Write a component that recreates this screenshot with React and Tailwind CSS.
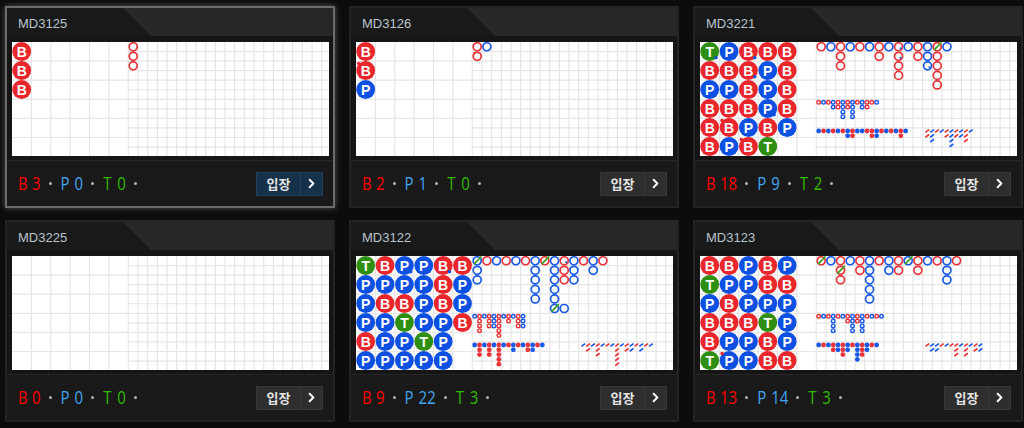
import { ChevronRight } from "lucide-react"

const RED = "#e8262c"
const BLUE = "#0d50e2"
const GREEN = "#2f8f12"
const RING_RED = "#e9343a"
const RING_BLUE = "#1a5ae8"

const tables = [
  {
    name: "MD3125", active: true, b: 3, p: 0, t: 0,
    bead: ["B", "B", "B"],
    big: "RRR",
  },
  {
    name: "MD3126", b: 2, p: 1, t: 0,
    bead: ["B", "B", "P"],
    beadDots: [[1, 0, "R"]],
    big: "RR B",
    bigDots: [[0, 1, "R"]],
  },
  {
    name: "MD3221", b: 18, p: 9, t: 2,
    bead: ["TPBBB", "BBBPB", "PPBPB", "BBBPB", "BBPBP", "BPBT"],
    beadDots: [[0, 0, "B"], [0, 2, "B"], [1, 2, "B"], [3, 3, "B"], [4, 1, "R"], [5, 2, "R"]],
    big: "R B RRR B R B RR B RRRR B RR BBB RRRRR B",
    slashes: [[12, 0]],
    bigDots: [[8, 0, "B"], [8, 1, "B"], [11, 2, "B"]],
    eye: "R B R BB RR BBBB RR BBBB R BB RR R B",
    small: "B R B R B R BB RR B B R RR BB R B R B RR B",
    roach: "RR BBB R B RR BBBB RR BB RRR B",
  },
  {
    name: "MD3225", b: 0, p: 0, t: 0,
    bead: [],
    big: "",
  },
  {
    name: "MD3122", b: 9, p: 22, t: 3,
    bead: ["TBPPBB", "PPPPBP", "PBBPBP", "PPTPPB", "BPPTP", "PPPPP"],
    beadDots: [[0, 2, "B"], [0, 4, "B"]],
    big: "BBB R B R B R BBBBB R BBBBBB RRR BBB R BB R",
    slashes: [[0, 0], [7, 0], [8, 5]],
    tails: [[9, 5, "B"]],
    bigDots: [[9, 0, "B"]],
    eye: "B RRRR B RRR BBB RRRRR B RR B RRR BBB",
    small: "B RRR B RRR B RRRRR B R BB R B RR BB R B",
    roach: "B RR B RRR B R B RRRRR B RR BB R BB R B",
  },
  {
    name: "MD3123", b: 13, p: 14, t: 3,
    bead: ["BBPBP", "TPPBB", "PBPPP", "BBBTP", "BPPBP", "TPPBB"],
    beadDots: [[2, 3, "B"], [5, 1, "R"]],
    big: "R B RRR B RR BBBBB R BB RR B RR B R BBB R",
    slashes: [[0, 0], [2, 1], [9, 0]],
    eye: "R B R BBBB R B RR BBBB RR BBBB R B R B",
    small: "B R B RR BB RRR BB R BBBB RRR BB R B",
    roach: "R BB BB R B R RRR B RRR B RR BB",
  },
]

// board grid lines, 6 big cols on the left then the small cells
function GridLines() {
  const lines = []
  for (let i = 1; i <= 6; i++) {
    const x = i * 19.38
    lines.push(<line key={`v${i}`} x1={x} y1="0" x2={x} y2="114" />)
  }
  for (let i = 1; i <= 21; i++) {
    const x = 116.3 + i * 9.67
    lines.push(<line key={`s${i}`} x1={x} y1="0" x2={x} y2="114" />)
  }
  for (let i = 1; i < 6; i++) {
    const y = i * 19.1
    lines.push(<line key={`h${i}`} x1="0" y1={y} x2="116" y2={y} />)
  }
  for (let i = 1; i < 12; i++) {
    const y = i * 9.55
    lines.push(<line key={`r${i}`} x1="116" y1={y} x2="317" y2={y} />)
  }
  return <g stroke="#e6e6e6" strokeWidth="1.2">{lines}</g>
}

function Bead({ row, col, kind }) {
  const cx = 9.7 + col * 19.36
  const cy = 9.5 + row * 19
  const fill = kind === "B" ? RED : kind === "P" ? BLUE : GREEN
  return (
    <g>
      <circle cx={cx} cy={cy} r="9.4" fill={fill} />
      <text
        x={cx}
        y={cy + 5}
        textAnchor="middle"
        fill="#fff"
        fontSize="14"
        fontWeight="700"
        fontFamily="'Liberation Sans', sans-serif"
      >
        {kind}
      </text>
    </g>
  )
}

function roadColumns(road) {
  return road ? road.split(" ") : []
}

function Board({ table }) {
  const { bead = [], beadDots = [], big = "", slashes = [], tails = [], bigDots = [], eye = "", small = "", roach = "" } = table
  const bigX = (c) => 121.2 + c * 9.67
  const bigY = (r) => 4.75 + r * 9.55
  const ringColor = (k) => (k === "R" ? RING_RED : RING_BLUE)

  return (
    <svg className="block w-[317px] h-[114px] bg-white" viewBox="0 0 317 114">
      <GridLines />

      {bead.map((line, r) =>
        line.split("").map((k, c) => <Bead key={`${r}-${c}`} row={r} col={c} kind={k} />)
      )}
      {beadDots.map(([r, c, k]) => {
        const off = k === "B" ? 6.3 : -7
        return (
          <circle
            key={`d${r}-${c}`}
            cx={9.7 + c * 19.36 + off}
            cy={9.5 + r * 19 + off}
            r="1.8"
            fill={k === "B" ? BLUE : RED}
          />
        )
      })}

      {roadColumns(big).map((col, c) =>
        col.split("").map((k, r) => (
          <circle key={`b${c}-${r}`} cx={bigX(c)} cy={bigY(r)} r="4" fill="none" stroke={ringColor(k)} strokeWidth="1.7" />
        ))
      )}
      {tails.map(([c, r, k]) => (
        <circle key={`t${c}`} cx={bigX(c)} cy={bigY(r)} r="4" fill="none" stroke={ringColor(k)} strokeWidth="1.7" />
      ))}
      {bigDots.map(([c, r, k]) => (
        <circle key={`p${c}-${r}`} cx={bigX(c) + (k === "B" ? 2 : -3)} cy={bigY(r) + (k === "B" ? 1.5 : -3)} r="1.1" fill={ringColor(k)} />
      ))}
      {slashes.map(([c, r]) => (
        <line key={`g${c}`} x1={bigX(c) - 3.2} y1={bigY(r) + 3.4} x2={bigX(c) + 4.2} y2={bigY(r) - 4.4} stroke="#3aa31e" strokeWidth="1.7" />
      ))}

      {roadColumns(eye).map((col, c) =>
        col.split("").map((k, r) => (
          <circle key={`e${c}-${r}`} cx={118.7 + c * 4.83} cy={60.3 + r * 4.8} r="1.8" fill="none" stroke={ringColor(k)} strokeWidth="1.4" />
        ))
      )}
      {roadColumns(small).map((col, c) =>
        col.split("").map((k, r) => (
          <circle key={`m${c}-${r}`} cx={118.7 + c * 4.83} cy={89 + r * 4.8} r="2.4" fill={ringColor(k)} />
        ))
      )}
      {roadColumns(roach).map((col, c) =>
        col.split("").map((k, r) => {
          const x = 227.3 + c * 4.83
          const y = 89 + r * 4.8
          return <line key={`c${c}-${r}`} x1={x - 1.9} y1={y + 1.4} x2={x + 1.9} y2={y - 1.4} stroke={ringColor(k)} strokeWidth="1.7" />
        })
      )}
    </svg>
  )
}

function Score({ letter, value, color }) {
  return (
    <>
      <span className={`inline-block w-[8px] text-center scale-y-[1.18] ${color}`}>{letter}</span>
      <span className={`inline-block ml-[6px] scale-y-[1.18] ${color}`}>{value}</span>
      <span className="ml-[8px] mr-[9px] w-[3px] h-[3px] rounded-full bg-[#b4b4b4]" />
    </>
  )
}

function TableCard({ table }) {
  const { active } = table
  return (
    <div
      className={`w-[330px] h-[202px] border-2 bg-[#191919] ${
        active ? "border-[#6c6c6c] shadow-[0_0_6px_#555]" : "border-[#242424]"
      }`}
    >
      <div className="h-[28px] bg-[#272727]">
        <div className="h-full w-[144px] bg-[#191919] flex items-center pl-[11px] pt-[3px] [clip-path:polygon(0_0,116px_0,100%_100%,0_100%)]">
          <span className="text-[13px] text-[#b9c5cc] font-['Liberation_Sans',sans-serif]">{table.name}</span>
        </div>
      </div>
      <div className="h-[124px] pt-[6px] pl-[5px] bg-[#151515]">
        <Board table={table} />
      </div>
      <div className="h-[46px] flex items-center justify-between pl-[11px] pr-[10px] border-t border-[#262626]">
        <div className="flex items-center text-[15px] font-medium font-['Open_Sans',sans-serif]">
          <Score letter="B" value={table.b} color="text-[#ff0000]" />
          <Score letter="P" value={table.p} color="text-[#42a5f0]" />
          <Score letter="T" value={table.t} color="text-[#33bb00]" />
        </div>
        <div className="flex h-[24px] w-[67px] text-white">
          <button
            className={`w-[45px] flex items-center justify-center border text-[13px] font-bold text-[#e4e4e4] font-['Noto_Sans_CJK_KR',sans-serif] ${
              active ? "bg-[#16324a] border-[#1f405c]" : "bg-[#2e2e2e] border-[#383838]"
            }`}
          >
            입장
          </button>
          <button
            className={`w-[22px] flex items-center justify-center border border-l-0 ${
              active ? "bg-[#16324a] border-[#1f405c]" : "bg-[#2e2e2e] border-[#383838]"
            }`}
          >
            <ChevronRight size={15} strokeWidth={3} />
          </button>
        </div>
      </div>
    </div>
  )
}

export default function App() {
  return (
    <div className="h-[428px] bg-[#0c0c0c] overflow-hidden pt-[6px] pl-[5px] grid grid-cols-[repeat(3,330px)] auto-rows-[202px] gap-x-[14px] gap-y-[12px]">
      {tables.map((t) => (
        <TableCard key={t.name} table={t} />
      ))}
    </div>
  )
}
